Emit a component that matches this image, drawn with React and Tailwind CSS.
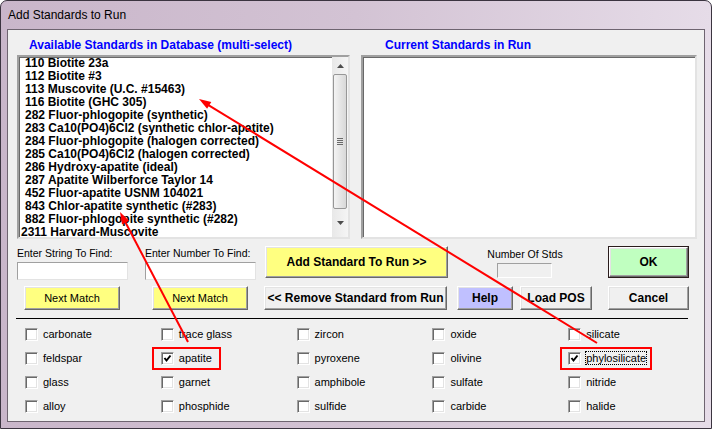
import React from "react";

const items = [
  ["110 Biotite 23a", 6],
  ["112 Biotite #3", 6],
  ["113 Muscovite (U.C. #15463)", 6],
  ["116 Biotite (GHC 305)", 6],
  ["282 Fluor-phlogopite (synthetic)", 6],
  ["283 Ca10(PO4)6Cl2 (synthetic chlor-apatite)", 6],
  ["284 Fluor-phlogopite (halogen corrected)", 6],
  ["285 Ca10(PO4)6Cl2 (halogen corrected)", 6],
  ["286 Hydroxy-apatite (ideal)", 6],
  ["287 Apatite Wilberforce Taylor 14", 6],
  ["452 Fluor-apatite USNM 104021", 6],
  ["843 Chlor-apatite synthetic (#283)", 6],
  ["882 Fluor-phlogopite synthetic (#282)", 6],
  ["2311 Harvard-Muscovite", 2],
];

const checks = [
  ["carbonate", "trace glass", "zircon", "oxide", "silicate"],
  ["feldspar", "apatite", "pyroxene", "olivine", "phylosilicate"],
  ["glass", "garnet", "amphibole", "sulfate", "nitride"],
  ["alloy", "phosphide", "sulfide", "carbide", "halide"],
];

function Btn({ className = "", children, bold = false }) {
  return (
    <div
      className={`flex items-center justify-center border border-t-white border-l-white border-r-[#696969] border-b-[#696969] shadow-[inset_-1px_-1px_0_#a0a0a0,inset_1px_1px_0_#e3e3e3] text-black ${
        bold ? "font-bold text-[12px]" : "text-[11px]"
      } ${className}`}
    >
      {children}
    </div>
  );
}

function CheckBox({ checked }) {
  return (
    <div className="w-[13px] h-[13px] bg-white border border-t-[#a0a0a0] border-l-[#a0a0a0] border-r-white border-b-white shadow-[inset_1px_1px_0_#696969,inset_-1px_-1px_0_#e3e3e3] flex items-center justify-center shrink-0">
      {checked && (
        <svg width="9" height="9" viewBox="0 0 9 9">
          <path d="M1.5 4 L3.5 6.5 L7.5 1.5" fill="none" stroke="#000" strokeWidth="2" />
        </svg>
      )}
    </div>
  );
}

export default function App() {
  return (
    <div className="relative w-[712px] h-[429px] overflow-hidden font-['Liberation_Sans',Arial,sans-serif] text-black">
      <div className="w-[712px] h-[429px] border border-[#3b3440] rounded-t-[7px] bg-gradient-to-r from-[#c9b6ca] via-[#d3c3d4] to-[#e6dce8] flex flex-col">
        {/* title */}
        <div className="h-[28px] pl-[7px] flex items-center text-[12px] text-black">
          Add Standards to Run
        </div>
        {/* client */}
        <div className="mx-[6px] h-[393px] border border-[#6e6470] bg-[#f0f0f0] flex flex-col">
          {/* headings */}
          <div className="h-[25px] flex font-bold text-[12px] text-[#0000ff] leading-[14px]">
            <div className="ml-[9px] w-[333px] pl-[12px] pt-[8px] whitespace-nowrap">
              Available Standards in Database (multi-select)
            </div>
            <div className="ml-[11px] w-[336px] pl-[24px] pt-[8px] whitespace-nowrap">
              Current Standards in Run
            </div>
          </div>
          {/* lists */}
          <div className="h-[184px] flex">
            <div className="ml-[9px] w-[333px] h-[184px] bg-white border-2 border-t-[#a0a0a0] border-l-[#a0a0a0] border-r-[#e3e3e3] border-b-[#e3e3e3] shadow-[inset_1px_1px_0_#696969] flex overflow-hidden">
              <div className="flex-1 overflow-hidden">
                {items.map(([t, pl]) => (
                  <div
                    key={t}
                    className="h-[13px] leading-[13px] text-[12px] font-bold whitespace-nowrap"
                    style={{ paddingLeft: pl }}
                  >
                    {t}
                  </div>
                ))}
              </div>
              <div className="w-[16px] h-full bg-gradient-to-r from-[#e8e8e8] to-[#f5f5f5] flex flex-col items-center">
                <div className="h-[17px] w-full flex items-center justify-center">
                  <svg width="7" height="4" viewBox="0 0 7 4">
                    <path d="M0 4 L3.5 0 L7 4 Z" fill="#4d4d4d" />
                  </svg>
                </div>
                <div className="w-[14px] h-[135px] rounded-[2px] border border-[#979797] bg-gradient-to-r from-[#f4f4f4] to-[#d8d8d8] flex flex-col items-center justify-center gap-[1px]">
                  <div className="w-[6px] h-[1px] bg-[#6a6a6a]" />
                  <div className="w-[6px] h-[1px] bg-[#6a6a6a]" />
                  <div className="w-[6px] h-[1px] bg-[#6a6a6a]" />
                  <div className="w-[6px] h-[1px] bg-[#6a6a6a]" />
                </div>
                <div className="flex-1 w-full flex items-center justify-center">
                  <svg width="7" height="4" viewBox="0 0 7 4">
                    <path d="M0 0 L7 0 L3.5 4 Z" fill="#4d4d4d" />
                  </svg>
                </div>
              </div>
            </div>
            <div className="ml-[11px] w-[336px] h-[184px] bg-white border-2 border-t-[#a0a0a0] border-l-[#a0a0a0] border-r-[#e3e3e3] border-b-[#e3e3e3] shadow-[inset_1px_1px_0_#696969]" />
          </div>
          {/* controls top row */}
          <div className="h-[43px] flex items-start">
            <div className="ml-[9px] w-[111px] flex flex-col">
              <div className="pt-[7px] leading-[14px] text-[10.5px] whitespace-nowrap">Enter String To Find:</div>
              <div className="mt-[2px] h-[18px] bg-white border border-t-[#a0a0a0] border-l-[#a0a0a0] border-r-[#e3e3e3] border-b-[#e3e3e3]" />
            </div>
            <div className="ml-[17px] w-[111px] flex flex-col">
              <div className="pt-[7px] leading-[14px] text-[10.5px] whitespace-nowrap">Enter Number To Find:</div>
              <div className="mt-[2px] h-[18px] bg-white border border-t-[#a0a0a0] border-l-[#a0a0a0] border-r-[#e3e3e3] border-b-[#e3e3e3]" />
            </div>
            <Btn bold className="ml-[9px] mt-[7px] w-[183px] h-[32px] bg-[#ffff80]">
              Add Standard To Run &gt;&gt;
            </Btn>
            <div className="ml-[9px] w-[136px] flex flex-col">
              <div className="pt-[8px] leading-[14px] text-[10.5px] text-center whitespace-nowrap">Number Of Stds</div>
              <div className="ml-[40px] mt-[2px] w-[55px] h-[15px] bg-[#f0f0f0] border border-t-[#a0a0a0] border-l-[#a0a0a0] border-r-white border-b-white" />
            </div>
            <div className="ml-[15px] mt-[7px] w-[81px] h-[32px] border border-[#2a1c1c]">
              <Btn bold className="w-full h-full bg-[#c0ffc0]">OK</Btn>
            </div>
          </div>
          {/* controls bottom row */}
          <div className="mt-[4px] h-[24px] flex">
            <Btn className="ml-[16px] w-[96px] h-[24px] bg-[#ffff80]">Next Match</Btn>
            <Btn className="ml-[32px] w-[96px] h-[24px] bg-[#ffff80]">Next Match</Btn>
            <Btn bold className="ml-[16px] w-[183px] h-[24px] bg-[#f0f0f0]">&lt;&lt; Remove Standard from Run</Btn>
            <Btn bold className="ml-[10px] w-[56px] h-[24px] bg-[#c0c0ff]">Help</Btn>
            <Btn bold className="ml-[7px] w-[72px] h-[24px] bg-[#f0f0f0]">Load POS</Btn>
            <Btn bold className="ml-[16px] w-[81px] h-[24px] bg-[#f0f0f0]">Cancel</Btn>
          </div>
          {/* separator */}
          <div className="mt-[8px] ml-[8px] w-[672px] h-[1px] bg-black" />
          {/* checkboxes */}
          <div className="mt-[3px] ml-[17px] flex flex-col">
            {checks.map((row, ri) => (
              <div key={ri} className="h-[24px] flex items-center">
                {row.map((label) => {
                  const checked = label === "apatite" || label === "phylosilicate";
                  return (
                    <div key={label} className="w-[136px] flex items-center gap-[5px] text-[11px]">
                      <CheckBox checked={checked} />
                      {label === "phylosilicate" ? (
                        <span className="border border-dotted border-black leading-[12px] -ml-[1px]">{label}</span>
                      ) : (
                        <span className="leading-[12px]">{label}</span>
                      )}
                    </div>
                  );
                })}
              </div>
            ))}
          </div>
        </div>
      </div>

      {/* annotation boxes */}
      <div className="absolute left-[152px] top-[347px] w-[69px] h-[23px] border-2 border-[#ff0000]" />
      <div className="absolute left-[560px] top-[347px] w-[92px] h-[23px] border-2 border-[#ff0000]" />

      {/* annotation arrows */}
      <svg className="absolute left-0 top-0 pointer-events-none" width="712" height="429" viewBox="0 0 712 429">
        <line x1="597" y1="343" x2="208" y2="104.8" stroke="#ff0000" strokeWidth="2" />
        <polygon points="199,99 211.3,101.9 207.1,108.7" fill="#ff0000" />
        <line x1="188" y1="342" x2="125" y2="221.5" stroke="#ff0000" strokeWidth="2" />
        <polygon points="120,212 129.1,220.7 122,224.5" fill="#ff0000" />
      </svg>
    </div>
  );
}
